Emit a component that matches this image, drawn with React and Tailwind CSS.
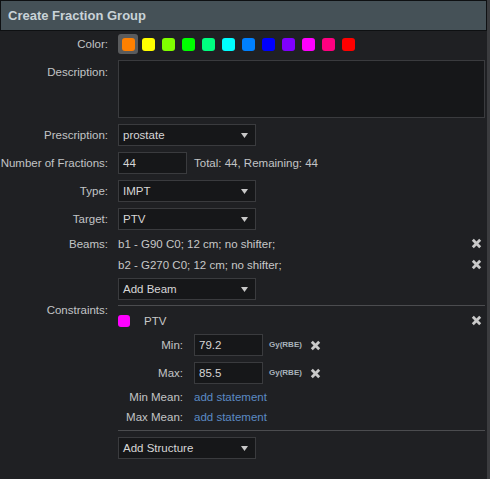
import React from "react";

const FONT = { fontFamily: '"Liberation Sans", Arial, sans-serif' };

const swatches = [
  "#ff8000", "#ffff00", "#80ff00", "#00ff00", "#00ff80", "#00ffff",
  "#0080ff", "#0000ff", "#8000ff", "#ff00ff", "#ff0080", "#ff0000",
];

function XIcon() {
  return (
    <svg width="11" height="11" viewBox="0 0 11 11" className="shrink-0">
      <path d="M1.8 1.8 L9.2 9.2 M9.2 1.8 L1.8 9.2" stroke="#c9c9c9" strokeWidth="2.8" strokeLinecap="butt" fill="none" />
    </svg>
  );
}

function Arrow() {
  return (
    <svg width="7" height="5" viewBox="0 0 7 5">
      <path d="M0 0 L7 0 L3.5 5 Z" fill="#c8c8c8" />
    </svg>
  );
}

function Select({ value }) {
  return (
    <div className="h-[22px] w-[138px] border border-[#3a3b3e] bg-[#161719] flex items-center justify-between pl-[4px] pr-[7px] text-[#d6d6d6]">
      <span>{value}</span>
      <Arrow />
    </div>
  );
}

function Input({ value }) {
  return (
    <div className="h-[22px] w-[69px] border border-[#3a3b3e] bg-[#161719] flex items-center pl-[4px] text-[#d6d6d6] shrink-0">
      {value}
    </div>
  );
}

function Row({ label, className = "", labelClass = "", children, align = "center" }) {
  return (
    <div className={`flex ${align === "center" ? "items-center" : "items-start"} ${className}`}>
      <div className={`w-[108px] shrink-0 text-right whitespace-nowrap text-[#c2c4c6] ${labelClass}`}>{label}</div>
      <div className="ml-[10px] w-[367px]">{children}</div>
    </div>
  );
}

export default function App() {
  return (
    <div className="w-[490px] h-[479px] flex bg-[#1f2023] text-[11.5px] leading-[14px]" style={FONT}>
      <div className="w-[487px] flex flex-col">
        <div className="h-[31px] w-[487px] border border-[#0e1012] bg-[#455157] flex items-center pl-[7px]">
          <span className="text-[13px] font-bold text-[#c9d3d8]">Create Fraction Group</span>
        </div>

        <Row label="Color:" className="mt-[3px] h-[20px]">
          <div className="flex">
            {swatches.map((c, i) => (
              <div key={c} className={`w-[20px] h-[20px] rounded-[3px] flex items-center justify-center ${i === 0 ? "bg-[#5a5b5d]" : ""}`}>
                <div className="w-[13px] h-[13px] rounded-[3px]" style={{ backgroundColor: c }} />
              </div>
            ))}
          </div>
        </Row>

        <Row label="Description:" className="mt-[6px]" align="top" labelClass="pt-[5px]">
          <div className="h-[58px] w-[367px] border border-[#3a3b3e] bg-[#161719]" />
        </Row>

        <Row label="Prescription:" className="mt-[6px]">
          <Select value="prostate" />
        </Row>

        <Row label="Number of Fractions:" className="mt-[6px]">
          <div className="flex items-center">
            <Input value="44" />
            <span className="ml-[7px] text-[#c2c4c6]">Total: 44, Remaining: 44</span>
          </div>
        </Row>

        <Row label="Type:" className="mt-[6px]">
          <Select value="IMPT" />
        </Row>

        <Row label="Target:" className="mt-[6px]">
          <Select value="PTV" />
        </Row>

        <Row label="Beams:" className="mt-[3px] h-[21px]">
          <div className="flex items-center justify-between pr-[3px] text-[#c8c8c8]">
            <span>b1 - G90 C0; 12 cm; no shifter;</span>
            <XIcon />
          </div>
        </Row>
        <Row label="" className="h-[21px]">
          <div className="flex items-center justify-between pr-[3px] text-[#c8c8c8]">
            <span>b2 - G270 C0; 12 cm; no shifter;</span>
            <XIcon />
          </div>
        </Row>

        <Row label="" className="mt-[3px]">
          <Select value="Add Beam" />
        </Row>

        <Row label="Constraints:" className="mt-[5px]" align="top" labelClass="-mt-[2px]">
          <div className="border-t border-[#4b4c4f]">
            <div className="mt-[4px] h-[21px] flex items-center justify-between pr-[3px]">
              <div className="flex items-center">
                <div className="w-[12px] h-[12px] rounded-[3px] bg-[#ff00ff]" />
                <span className="ml-[14px] text-[#c8c8c8]">PTV</span>
              </div>
              <XIcon />
            </div>

            <div className="mt-[3px] flex items-center">
              <div className="w-[65px] text-right text-[#c2c4c6]">Min:</div>
              <div className="ml-[11px]"><Input value="79.2" /></div>
              <span className="ml-[6px] text-[8px] font-bold text-[#a9b3bc]">Gy(RBE)</span>
              <span className="ml-[8px] flex"><XIcon /></span>
            </div>
            <div className="mt-[6px] flex items-center">
              <div className="w-[65px] text-right text-[#c2c4c6]">Max:</div>
              <div className="ml-[11px]"><Input value="85.5" /></div>
              <span className="ml-[6px] text-[8px] font-bold text-[#a9b3bc]">Gy(RBE)</span>
              <span className="ml-[8px] flex"><XIcon /></span>
            </div>
            <div className="mt-[3px] h-[20px] flex items-center">
              <div className="w-[65px] text-right whitespace-nowrap text-[#c2c4c6]">Min Mean:</div>
              <span className="ml-[11px] text-[#5b8ac4]">add statement</span>
            </div>
            <div className="h-[20px] flex items-center">
              <div className="w-[65px] text-right whitespace-nowrap text-[#c2c4c6]">Max Mean:</div>
              <span className="ml-[11px] text-[#5b8ac4]">add statement</span>
            </div>
            <div className="mt-[3px] border-t border-[#4b4c4f]" />
            <div className="mt-[6px]">
              <Select value="Add Structure" />
            </div>
          </div>
        </Row>
      </div>
      <div className="w-[3px] h-full bg-[#3b3c3f]" />
    </div>
  );
}
